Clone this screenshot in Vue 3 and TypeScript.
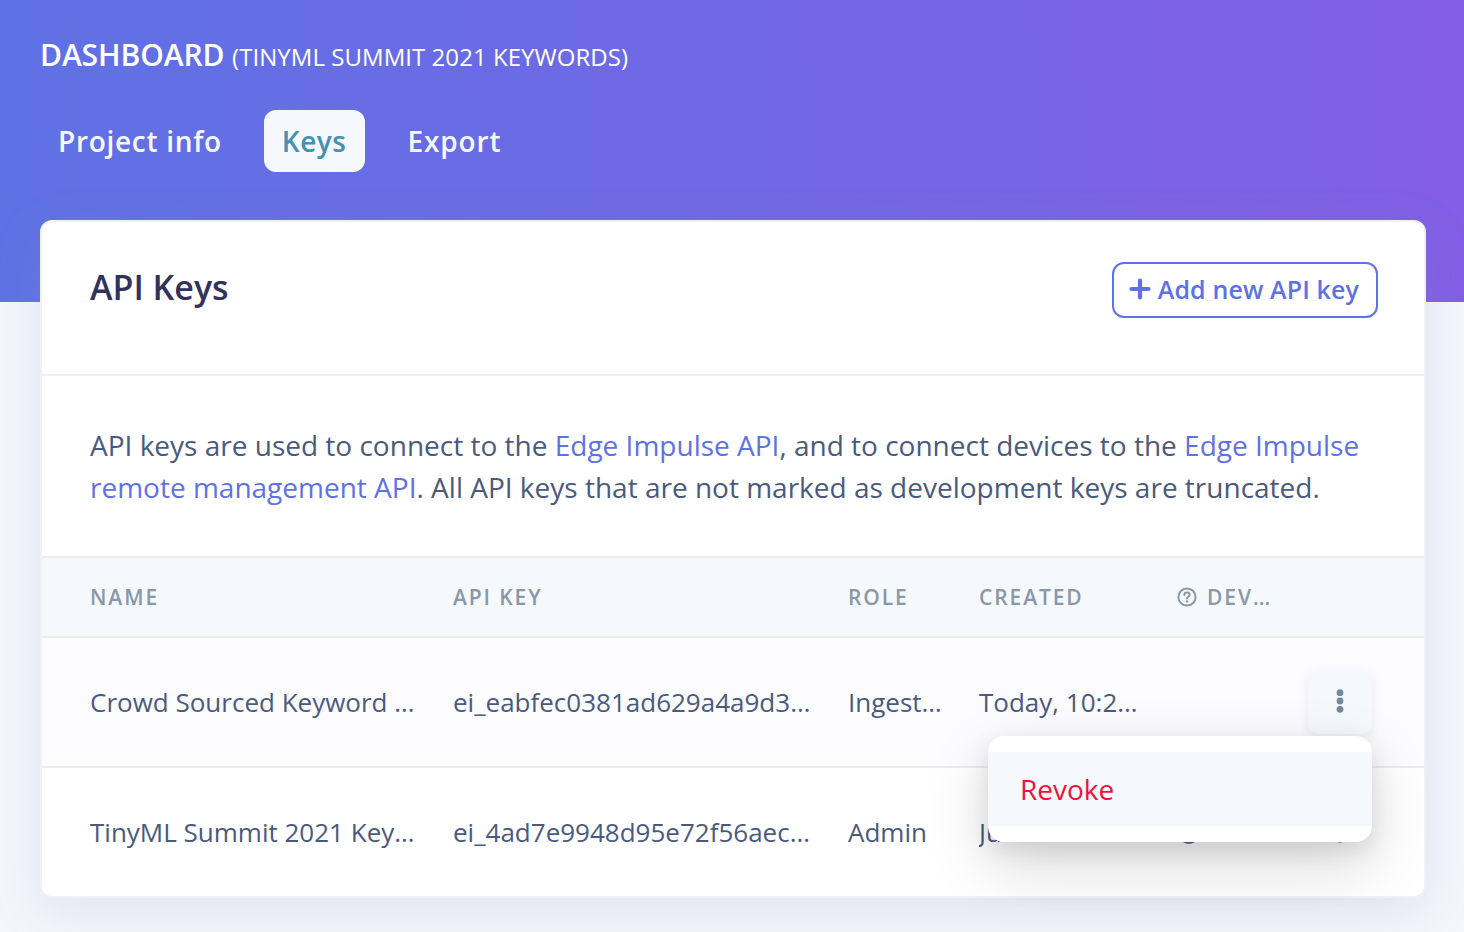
<script setup lang="ts">
interface ApiKey {
  name: string
  key: string
  role: string
  created: string
  isDev: boolean
}

const keys: ApiKey[] = [
  {
    name: 'Crowd Sourced Keyword Collection',
    key: 'ei_eabfec0381ad629a4a9d3f0b27c41de8',
    role: 'Ingestion',
    created: 'Today, 10:24:11',
    isDev: false,
  },
  {
    name: 'TinyML Summit 2021 Keywords',
    key: 'ei_4ad7e9948d95e72f56aec1b03d8877f2',
    role: 'Admin',
    created: 'Jun 12 2021, 09:31',
    isDev: true,
  },
]
</script>

<template>
  <div class="page">
    <header class="hero">
      <h1 class="hero__title">DASHBOARD <small>(TINYML SUMMIT 2021 KEYWORDS)</small></h1>
      <nav class="tabs">
        <a class="tab">Project info</a>
        <a class="tab tab--active">Keys</a>
        <a class="tab tab--last">Export</a>
      </nav>
    </header>

    <section class="card">
      <div class="card__head">
        <h2>API Keys</h2>
        <button class="add-btn" type="button">
          <svg width="22" height="22" viewBox="0 0 22 22" aria-hidden="true">
            <path d="M11 2.5v17M2.5 11h17" stroke="currentColor" stroke-width="4.2" stroke-linecap="round" fill="none" />
          </svg>
          Add new API key
        </button>
      </div>

      <p class="intro">
        API keys are used to connect to the <a>Edge Impulse API</a>, and to connect devices to the
        <a>Edge Impulse remote management API</a>. All API keys that are not marked as development
        keys are truncated.
      </p>

      <div class="row row--head">
        <span class="cell">Name</span>
        <span class="cell">API key</span>
        <span class="cell">Role</span>
        <span class="cell">Created</span>
        <span class="cell cell--dev">
          <svg width="20" height="20" viewBox="0 0 20 20" aria-hidden="true">
            <circle cx="10" cy="10" r="8.6" fill="none" stroke="currentColor" stroke-width="2" />
            <path d="M7.4 8c0-1.5 1.1-2.4 2.6-2.4s2.6.9 2.6 2.2c0 1.9-2.6 1.9-2.6 3.7" fill="none" stroke="currentColor" stroke-width="2" stroke-linecap="round" />
            <circle cx="10" cy="14.4" r="1.2" fill="currentColor" />
          </svg>
          <span class="cell__clip">Development</span>
        </span>
        <span />
      </div>

      <div v-for="(k, i) in keys" :key="k.key" class="row" :class="{ 'row--plain': i > 0 }">
        <span class="cell">{{ k.name }}</span>
        <span class="cell">{{ k.key }}</span>
        <span class="cell">{{ k.role }}</span>
        <span class="cell">{{ k.created }}</span>
        <span class="cell cell--check">
          <svg v-if="k.isDev" width="24" height="24" viewBox="0 0 24 24" aria-hidden="true">
            <circle cx="12" cy="12" r="10.4" fill="none" stroke="#4a5a7e" stroke-width="2.6" />
            <path d="M7 12.5l3.4 3.4L17 9" fill="none" stroke="#4a5a7e" stroke-width="2.6" />
          </svg>
        </span>
        <span class="cell--menu">
          <button class="dots" type="button" aria-label="Actions">
            <svg width="8" height="24" viewBox="0 0 8 24" aria-hidden="true">
              <circle cx="4" cy="3.7" r="3.4" />
              <circle cx="4" cy="12" r="3.4" />
              <circle cx="4" cy="20.3" r="3.4" />
            </svg>
          </button>
        </span>
      </div>

      <div class="menu">
        <div class="menu__item">Revoke</div>
      </div>
    </section>
  </div>
</template>

<style>
html,
body {
  margin: 0;
  height: 100%;
  overflow: hidden;
  background: #f4f5fb;
}
</style>

<style scoped>
.page {
  height: 932px;
  overflow: hidden;
  background: #f4f6fc;
  font-family: "Open Sans", "Noto Sans", sans-serif;
  color: #4a5a7e;
}

.hero {
  box-sizing: border-box;
  height: 302px;
  padding: 37px 40px 0;
  background: linear-gradient(87deg, #5e72e4, #825ee4);
  color: #fff;
}

.hero__title {
  margin: 0;
  font-size: 30px;
  line-height: 36px;
  font-weight: 600;
  letter-spacing: -0.1px;
}

.hero__title small {
  font-size: 24px;
  font-weight: 400;
  letter-spacing: 0.05px;
}

.tabs {
  display: flex;
  gap: 24px;
  margin-top: 35px;
}

.tab {
  padding: 0 18px;
  height: 62px;
  line-height: 63px;
  border-radius: 12px;
  font-size: 28px;
  font-weight: 600;
  letter-spacing: 0.7px;
  color: #f6f9fc;
}

.tab--active {
  padding-right: 19px;
  background: #f6f9fc;
  color: #468fb5;
  letter-spacing: 0.5px;
}

.tab--last {
  letter-spacing: 0.9px;
}

.card {
  position: relative;
  box-sizing: border-box;
  width: 1386px;
  height: 678px;
  margin: -82px 0 0 40px;
  background: #fff;
  border: 2px solid #eff1f5;
  border-radius: 12px;
  box-shadow: 0 14px 48px rgba(136, 152, 190, 0.18);
}

.card__head {
  display: flex;
  justify-content: space-between;
  box-sizing: border-box;
  height: 154px;
  padding: 40px 46px 0 48px;
  border-bottom: 2px solid #f1f2f5;
}

.card__head h2 {
  margin: 0;
  font-size: 34px;
  line-height: 50px;
  font-weight: 600;
  letter-spacing: 0;
  color: #32325d;
}

.add-btn {
  display: flex;
  align-items: center;
  gap: 7px;
  box-sizing: border-box;
  height: 56px;
  padding: 0 17px 2px 15px;
  background: #fff;
  border: 2px solid #5e72e4;
  border-radius: 12px;
  color: #5e72e4;
  font: 600 25px "Open Sans", sans-serif;
  letter-spacing: 0.12px;
}

.intro {
  box-sizing: border-box;
  height: 180px;
  margin: 0;
  padding: 48px 48px 0;
  font-size: 28px;
  line-height: 42px;
  letter-spacing: 0;
}

.intro a {
  color: #5e72e4;
}

.row {
  display: grid;
  grid-template-columns: 363px 395px 131px 198px 1fr 52px;
  align-items: center;
  box-sizing: border-box;
  height: 130px;
  padding: 0 52px 0 48px;
  background: #fcfcfe;
  border-top: 2px solid #ebedf1;
  font-size: 26px;
}

.row--head {
  height: 80px;
  background: #f6f9fc;
  font-size: 21px;
  font-weight: 600;
  letter-spacing: 1.9px;
  text-transform: uppercase;
  color: #8898aa;
}

.row--plain {
  background: #fff;
  border-radius: 0 0 10px 10px;
}

.cell {
  display: block;
  overflow: hidden;
  padding-right: 37px;
  white-space: nowrap;
  text-overflow: ellipsis;
}

.cell--dev {
  display: flex;
  align-items: center;
  gap: 10px;
  padding-right: 0;
}

.cell__clip {
  width: 66px;
  overflow: hidden;
  text-overflow: ellipsis;
}

.cell--check {
  display: flex;
  align-items: center;
}

.cell--menu {
  display: flex;
  justify-content: flex-end;
}

.dots {
  display: flex;
  flex: none;
  align-items: center;
  justify-content: center;
  width: 64px;
  height: 64px;
  padding: 0 0 3px;
  background: #f6f9fc;
  border: 0;
  border-radius: 12px;
  box-shadow: 0 4px 12px rgba(50, 50, 93, 0.09);
}

.row--plain .dots {
  background: transparent;
  box-shadow: none;
}

.dots svg {
  fill: #7387a0;
}

.menu {
  position: absolute;
  top: 514px;
  left: 946px;
  box-sizing: border-box;
  width: 384px;
  height: 106px;
  padding: 16px 0;
  background: #fff;
  border-radius: 16px;
  box-shadow: 0 24px 64px rgba(0, 0, 0, 0.15), 0 8px 22px rgba(50, 50, 93, 0.12);
}

.menu__item {
  height: 74px;
  padding-left: 32px;
  background: #f6f9fc;
  font-size: 28px;
  line-height: 74px;
  color: #f0113d;
}
</style>
